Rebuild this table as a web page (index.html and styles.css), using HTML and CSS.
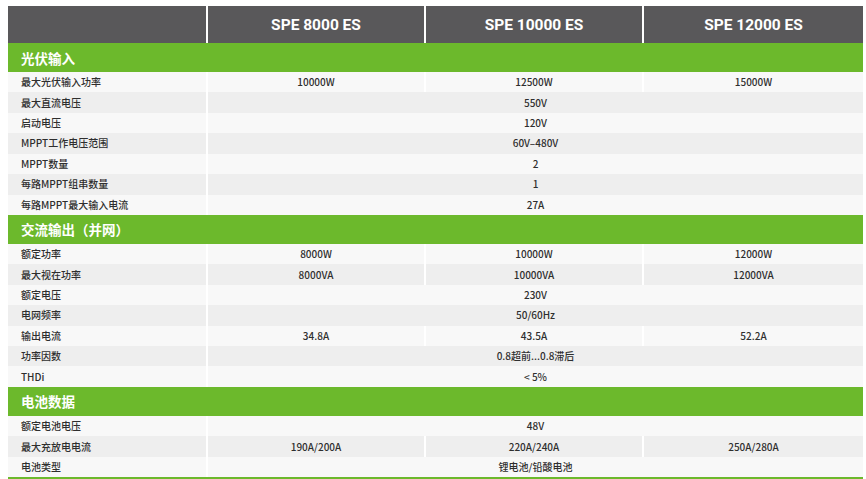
FILE: index.html
```html
<!DOCTYPE html>
<html lang="zh-CN">
<head>
<meta charset="utf-8">
<title>SPE ES 参数</title>
<link rel="stylesheet" href="styles.css">
</head>
<body>
<table class="spec">
  <colgroup>
    <col class="c-label">
    <col class="c-model">
    <col class="c-model">
    <col class="c-last">
  </colgroup>
  <thead>
    <tr class="head">
      <th></th>
      <th>SPE 8000 ES</th>
      <th>SPE 10000 ES</th>
      <th>SPE 12000 ES</th>
    </tr>
  </thead>
  <tbody>
    <tr class="section"><td colspan="4">光伏输入</td></tr>
    <tr><td class="label">最大光伏输入功率</td><td class="val">10000W</td><td class="val">12500W</td><td class="val">15000W</td></tr>
    <tr><td class="label">最大直流电压</td><td class="val" colspan="3">550V</td></tr>
    <tr><td class="label">启动电压</td><td class="val" colspan="3">120V</td></tr>
    <tr><td class="label">MPPT工作电压范围</td><td class="val" colspan="3">60V–480V</td></tr>
    <tr><td class="label">MPPT数量</td><td class="val" colspan="3">2</td></tr>
    <tr><td class="label">每路MPPT组串数量</td><td class="val" colspan="3">1</td></tr>
    <tr><td class="label">每路MPPT最大输入电流</td><td class="val" colspan="3">27A</td></tr>
  </tbody>
  <tbody>
    <tr class="section"><td colspan="4">交流输出（并网）</td></tr>
    <tr><td class="label">额定功率</td><td class="val">8000W</td><td class="val">10000W</td><td class="val">12000W</td></tr>
    <tr><td class="label">最大视在功率</td><td class="val">8000VA</td><td class="val">10000VA</td><td class="val">12000VA</td></tr>
    <tr><td class="label">额定电压</td><td class="val" colspan="3">230V</td></tr>
    <tr><td class="label">电网频率</td><td class="val" colspan="3">50/60Hz</td></tr>
    <tr><td class="label">输出电流</td><td class="val">34.8A</td><td class="val">43.5A</td><td class="val">52.2A</td></tr>
    <tr><td class="label">功率因数</td><td class="val" colspan="3">0.8超前...0.8滞后</td></tr>
    <tr><td class="label">THDi</td><td class="val" colspan="3">&lt; 5%</td></tr>
  </tbody>
  <tbody>
    <tr class="section"><td colspan="4">电池数据</td></tr>
    <tr><td class="label">额定电池电压</td><td class="val" colspan="3">48V</td></tr>
    <tr><td class="label">最大充放电电流</td><td class="val">190A/200A</td><td class="val">220A/240A</td><td class="val">250A/280A</td></tr>
    <tr><td class="label">电池类型</td><td class="val" colspan="3">锂电池/铅酸电池</td></tr>
  </tbody>
  <tbody>
    <tr class="section"><td colspan="4"></td></tr>
  </tbody>
</table>
</body>
</html>
```
FILE: styles.css
```css
html, body {
  margin: 0;
  padding: 0;
  background: #ffffff;
}

body {
  padding: 6px 0 0 8px;
  font-family: "Noto Sans CJK SC", "Noto Sans", sans-serif;
  color: #333333;
}

.spec {
  width: 855px;
  table-layout: fixed;
  border-collapse: separate;
  border-spacing: 0;
}

.c-label { width: 198px; }
.c-model { width: 218px; }
.c-last { width: 221px; }

.head th {
  height: 37px;
  padding: 0;
  background: #59585a;
  color: #ffffff;
  font-family: Roboto, "Liberation Sans", sans-serif;
  font-weight: 700;
  font-size: 15.5px;
  text-align: center;
  vertical-align: middle;
}

.head th + th {
  border-left: 2px solid #ffffff;
}

.section td {
  height: 29px;
  padding: 0 0 0 13px;
  background: #6cb92c;
  color: #ffffff;
  font-size: 13.5px;
  font-weight: 700;
  vertical-align: middle;
}

tbody tr {
  height: 20.43px;
  background: #f8f8f8;
}

tbody tr:nth-child(odd) {
  background: #eeeeee;
}

.label {
  padding: 0 0 0 13px;
  font-size: 10px;
  font-weight: 500;
  line-height: 14px;
  color: #2e2e2e;
  white-space: nowrap;
  vertical-align: middle;
}

.val {
  padding: 0;
  font-size: 10px;
  font-weight: 500;
  line-height: 14px;
  color: #2e2e2e;
  text-align: center;
  vertical-align: middle;
  border-left: 2px solid #ffffff;
  white-space: nowrap;
}
```
